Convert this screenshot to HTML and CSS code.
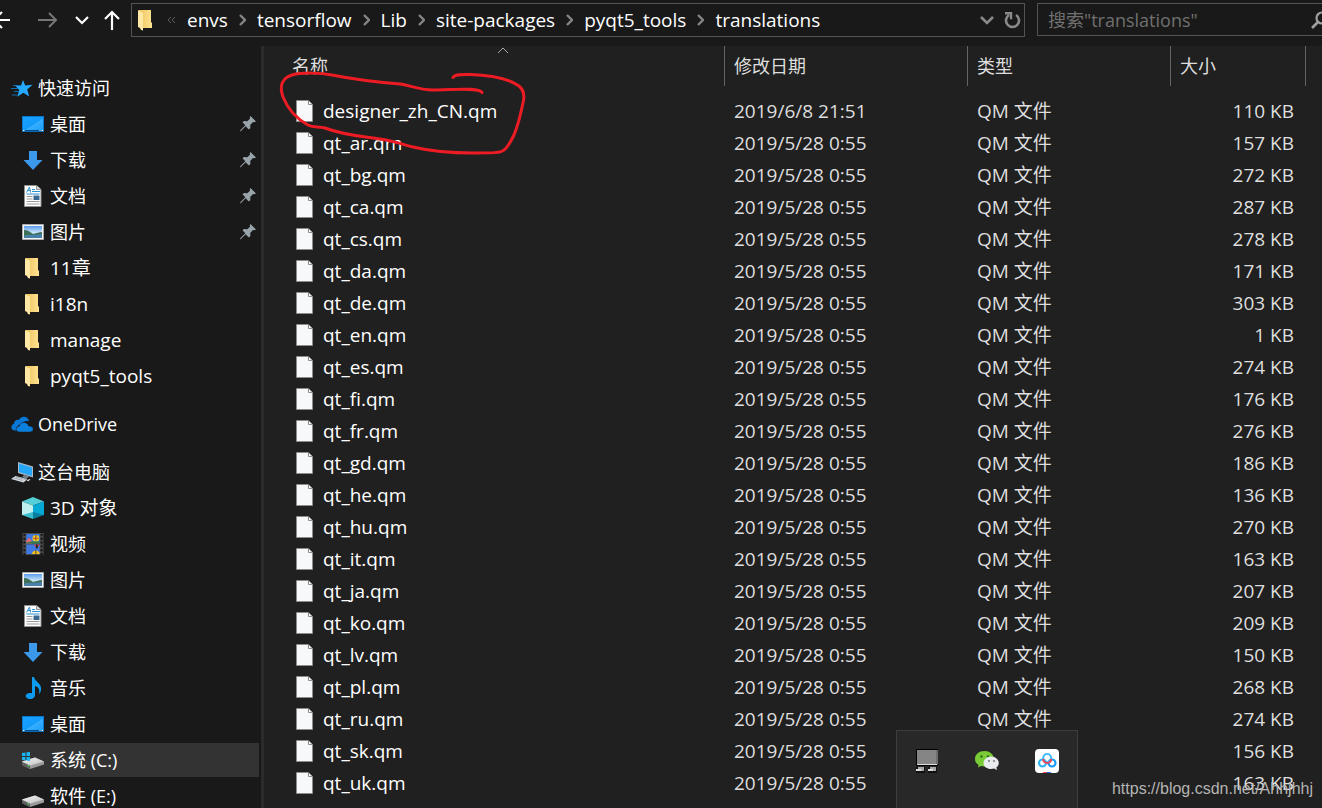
FILE: index.html
```html
<!DOCTYPE html>
<html lang="zh-CN">
<head>
<meta charset="utf-8">
<title>translations</title>
<link rel="stylesheet" href="styles.css">
</head>
<body>
<svg class="sprite" aria-hidden="true">
<defs>
<linearGradient id="g-blue" x1="0" y1="0" x2="1" y2="1"><stop offset="0" stop-color="#19a2ff"/><stop offset=".55" stop-color="#129bfa"/><stop offset=".56" stop-color="#37adff"/><stop offset="1" stop-color="#1da0fb"/></linearGradient>
<linearGradient id="g-fold" x1="0" y1="0" x2="1" y2="0"><stop offset="0" stop-color="#eec45f"/><stop offset="1" stop-color="#ffe391"/></linearGradient>
<linearGradient id="g-sky" x1="0" y1="0" x2="0" y2="1"><stop offset="0" stop-color="#5c9df0"/><stop offset=".55" stop-color="#c9e6fa"/><stop offset="1" stop-color="#8fc0dd"/></linearGradient>
<linearGradient id="g-disk" x1="0" y1="0" x2="1" y2="1"><stop offset="0" stop-color="#f5f5f5"/><stop offset="1" stop-color="#bdbdbf"/></linearGradient>
<symbol id="star" viewBox="0 0 22 22"><path d="M12 3l2.200 5.500 7.300-.7-5.300 4.700 2 7-5.800-3.700-6.200 4 2.100-6.800L4 8.500h6z" fill="#24a9ff"/><path d="M2 8.500h7M0 11.500h7M3 14.500h5M1 18h5" stroke="#0f6dac" stroke-width="1.200"/></symbol>
<symbol id="desktop" viewBox="0 0 22 22"><path d="M0 3h22v16H0z" fill="#0878cf"/><path d="M1 4h20v13H1z" fill="url(#g-blue)"/><path d="M1 17h20v1.200H1z" fill="#064c83"/><path d="M1 17h1.500v1H1zM17.500 17h1v1h-1zM19.500 17H21v1h-1.500z" fill="#fff"/></symbol>
<symbol id="down" viewBox="0 0 22 22"><path d="M7 2h8v9h5.500L11 21 1.500 11H7z" fill="#3c98ea"/></symbol>
<symbol id="doc" viewBox="0 0 22 22"><path d="M2.500.5h12l4.500 4v17H2.500z" fill="#fff" stroke="#909090"/><path d="M14.500.5v4H19" fill="#ddd" stroke="#909090"/><path d="M4.500 7.500l3-5.500 1 5.500M6 5.500h2.500M10 4.500h3M10 6.500h8M4.500 9h13" stroke="#2c92d0" fill="none"/><path d="M4.500 11.500h6M4.500 14h6M4.500 16.500h13M4.500 19h13" stroke="#999"/><path d="M11.500 10.500h6v4.500h-6z" fill="#3a6a92"/></symbol>
<symbol id="pic" viewBox="0 0 22 22"><path d="M.5 3.500h21v15H.5z" fill="#f6f6f6" stroke="#aaa"/><path d="M2 5h18v12H2z" fill="url(#g-sky)"/><path d="M2 9c4 0 6 2 9 4 4-1 6-2 9-2v3c-7 1-12 0-18 1z" fill="#3f7158"/><path d="M2 15c6-2 12-1 18-2v4H2z" fill="#467fa8"/></symbol>
<symbol id="folder" viewBox="0 0 22 22"><path d="M4 1h12v12l1 1v5H7L4 17z" fill="url(#g-fold)"/><path d="M3 1l5 3v17.500l-2-.5-1-2-2-1z" fill="#ffe8a6"/></symbol>
<symbol id="cloud" viewBox="0 0 22 22"><path d="M4 17.500C-.5 17.500-.8 12 3 10.800 3 7 6.500 6 8 7c2.500-5 9-4 10 1 -5-.5-7 2-7 3.500-4 0-6 2.500-5.500 6z" fill="#0877d5"/><path d="M8.500 19C4 19 4 13.500 8.500 13c1-5 8.500-4.500 9 0 6-.3 6 6 1.500 6z" fill="#0a80df" stroke="#191919" stroke-width=".5"/></symbol>
<symbol id="pc" viewBox="0 0 22 22"><path d="M7 1l15 4.500v11L7 12z" fill="#aab9c5"/><path d="M8 2.500l13 4v8.500L8 11z" fill="#25a6f8"/><path d="M13 14l5 1.500-2 2-5-1.200z" fill="#74828b"/><path d="M4.500 15l12 3-4 3.500L0 18z" fill="#d5dbe0"/><path d="M3 17l9 2.500M5 16l10 2.500" stroke="#899399" stroke-width=".7"/><path d="M15.500 19.500l3-1.500 1 .8-2.500 1.500z" fill="#e3e3e3"/></symbol>
<symbol id="cube" viewBox="0 0 22 22"><path d="M11 0l11 4.500-11 4L0 4.500z" fill="#55ced8"/><path d="M0 4.500l11 4V18L0 18z" fill="#c0eff0"/><path d="M22 4.500l-11 4V18l11 0z" fill="#05a9d4"/><path d="M0 18l11-3v7z" fill="#39bccb"/><path d="M22 18l-11-3v7z" fill="#087f9f"/></symbol>
<symbol id="video" viewBox="0 0 22 23"><path d="M0 0h22v23H0z" fill="#4a4a4a"/><path d="M4 1h14v10H4zM4 12h14v10H4z" fill="#3e78e0"/><path d="M2 1v22M20 1v22" stroke="#111" stroke-width="2" stroke-dasharray="2 2"/><path d="M4 8l3-3 3 4v2H4z" fill="#ee6472"/><ellipse cx="14" cy="5.500" rx="3.500" ry="3.500" fill="#f7ce22"/><path d="M14 2v6" stroke="#222" stroke-width=".8"/><path d="M11 5.500h6" stroke="#c8402d"/><path d="M4 10l5-1 9 0v2H4z" fill="#337b38"/><path d="M12 12h6l-2 3h-2z" fill="#e2464a"/><path d="M14 12h2v4h-2z" fill="#222"/><path d="M10 22c0-5 8-5 8 0z" fill="#f4c21f"/><path d="M14 18v4" stroke="#222" stroke-width=".8"/></symbol>
<symbol id="music" viewBox="0 0 22 22"><path d="M10 0h2c1 5 8 6 7 13-.3 2-1 3-2 4 1-5-.5-7-4-8v9c0 3-3 4.500-6 4-5-1-4-6 1-6 1 0 1.500 0 2 .3z" fill="#0d9bf0"/></symbol>
<symbol id="disk" viewBox="0 0 22 22"><path d="M0 14.500L13 10.500l9 4v3L8 22l-8-4z" fill="#9b9b9b"/><path d="M0 14.500L13 10.500l9 4L8 18.500z" fill="url(#g-disk)"/><path d="M0 15l8 3.700V22l-8-4z" fill="#5e5e5e"/><path d="M5.500 18.500l1.500.7" stroke="#36df51" stroke-width="1.300"/></symbol>
<symbol id="sysdisk" viewBox="0 0 22 22"><use href="#disk" y="-2" width="22" height="22"/><path d="M0 4l3.500-.5V7H0zM4.500 3.300L8 3v4H4.500zM0 8h3.500v3.500L0 11zM4.500 8H8v4l-3.500-.5z" fill="#18b7f0"/></symbol>
<symbol id="pin" viewBox="0 0 16 16"><path d="M10.500 0l5.500 5.500-1.800.8-1.200-.3-2.800 3 .2 3-1.500 1.500-3.300-3.300L1 15l-1 .5L.5 14l4.800-4.800L2.500 6.300 4 5l3.200.2L10 2.800l-.3-1.600z" fill="#98a3aa"/></symbol>
<symbol id="file" viewBox="0 0 17 22"><path d="M.5.500h11.500l4.500 4.500v16.500H.5z" fill="#f7f8f9" stroke="#8d8d8d"/><path d="M12.500.5v4h4" fill="#eee" stroke="#8d8d8d"/></symbol>
<symbol id="chev" viewBox="0 0 7 12"><path d="M1 1l5 5-5 5" fill="none" stroke="#858585" stroke-width="2.400"/></symbol>
</defs>
</svg>

<div class="window">
<header class="toolbar">
  <nav class="history" aria-label="导航">
    <button aria-label="后退"><svg width="11" height="20" viewBox="0 0 11 20"><path d="M-6 10H11M3 2l-8 8 8 8" transform="translate(-1 0)" fill="none" stroke="#fff" stroke-width="2"/></svg></button>
    <button aria-label="前进"><svg width="20" height="16" viewBox="0 0 20 16"><path d="M0 8h18M11 1l7 7-7 7" fill="none" stroke="#777" stroke-width="2"/></svg></button>
    <button aria-label="最近浏览的位置"><svg width="14" height="9" viewBox="0 0 14 9"><path d="M1 1l6 6 6-6" fill="none" stroke="#fff" stroke-width="2.200"/></svg></button>
    <button aria-label="向上"><svg width="16" height="20" viewBox="0 0 16 20"><path d="M8 20V2M1 9l7-7 7 7" fill="none" stroke="#fff" stroke-width="2.200"/></svg></button>
  </nav>
  <div class="address">
    <svg class="icon addr-folder"><use href="#folder"/></svg>
    <svg class="more" viewBox="0 0 9 8"><path d="M4 1L1 4l3 3M8 1L5 4l3 3" fill="none" stroke="#5c5c5c"/></svg>
    <button class="crumb">envs</button><svg class="chev"><use href="#chev"/></svg>
    <button class="crumb">tensorflow</button><svg class="chev"><use href="#chev"/></svg>
    <button class="crumb">Lib</button><svg class="chev"><use href="#chev"/></svg>
    <button class="crumb">site-packages</button><svg class="chev"><use href="#chev"/></svg>
    <button class="crumb">pyqt5_tools</button><svg class="chev"><use href="#chev"/></svg>
    <button class="crumb">translations</button>
    <button class="drop" aria-label="以前的位置"><svg width="14" height="9" viewBox="0 0 14 9"><path d="M1 1l6 6 6-6" fill="none" stroke="#8a8a8a" stroke-width="2.600"/></svg></button>
    <button class="refresh" aria-label="刷新"><svg width="17" height="17" viewBox="0 0 17 17"><path d="M12 3A6.500 6.500 0 1 1 5 3" fill="none" stroke="#8a8a8a" stroke-width="2.600"/><path d="M1 1.300h6v6" fill="none" stroke="#8a8a8a" stroke-width="2.400"/></svg></button>
  </div>
  <label class="search">
    <input type="text" aria-label="搜索" placeholder="搜索&quot;translations&quot;">
    <svg width="18" height="18" viewBox="0 0 18 18"><circle cx="11" cy="7" r="5.500" fill="none" stroke="#a0a0a0" stroke-width="2.200"/><path d="M7 11l-6 6" stroke="#a0a0a0" stroke-width="2.600"/></svg>
  </label>
</header>

<div class="body">
<nav class="sidebar" aria-label="文件夹">
  <section>
    <a class="item root" href="#"><svg class="icon"><use href="#star"/></svg><span>快速访问</span></a>
    <a class="item" href="#"><svg class="icon"><use href="#desktop"/></svg><span>桌面</span><svg class="pin"><use href="#pin"/></svg></a>
    <a class="item" href="#"><svg class="icon"><use href="#down"/></svg><span>下载</span><svg class="pin"><use href="#pin"/></svg></a>
    <a class="item" href="#"><svg class="icon"><use href="#doc"/></svg><span>文档</span><svg class="pin"><use href="#pin"/></svg></a>
    <a class="item" href="#"><svg class="icon"><use href="#pic"/></svg><span>图片</span><svg class="pin"><use href="#pin"/></svg></a>
    <a class="item latin" href="#"><svg class="icon"><use href="#folder"/></svg><span>11章</span></a>
    <a class="item latin" href="#"><svg class="icon"><use href="#folder"/></svg><span>i18n</span></a>
    <a class="item latin" href="#"><svg class="icon"><use href="#folder"/></svg><span>manage</span></a>
    <a class="item latin" href="#"><svg class="icon"><use href="#folder"/></svg><span>pyqt5_tools</span></a>
  </section>
  <section>
    <a class="item root" href="#"><svg class="icon"><use href="#cloud"/></svg><span>OneDrive</span></a>
  </section>
  <section>
    <a class="item root" href="#"><svg class="icon"><use href="#pc"/></svg><span>这台电脑</span></a>
    <a class="item latin" href="#"><svg class="icon"><use href="#cube"/></svg><span>3D 对象</span></a>
    <a class="item" href="#"><svg class="icon"><use href="#video"/></svg><span>视频</span></a>
    <a class="item" href="#"><svg class="icon"><use href="#pic"/></svg><span>图片</span></a>
    <a class="item" href="#"><svg class="icon"><use href="#doc"/></svg><span>文档</span></a>
    <a class="item" href="#"><svg class="icon"><use href="#down"/></svg><span>下载</span></a>
    <a class="item" href="#"><svg class="icon"><use href="#music"/></svg><span>音乐</span></a>
    <a class="item" href="#"><svg class="icon"><use href="#desktop"/></svg><span>桌面</span></a>
    <a class="item selected" href="#" aria-current="true"><svg class="icon"><use href="#sysdisk"/></svg><span>系统 (C:)</span></a>
    <a class="item" href="#"><svg class="icon"><use href="#disk"/></svg><span>软件 (E:)</span></a>
  </section>
</nav>

<main class="files">
<table>
<colgroup><col><col class="c-date"><col class="c-type"><col class="c-size"></colgroup>
<thead><tr>
<th class="name" aria-sort="ascending"><button>名称</button><svg class="sort" viewBox="0 0 12 7"><path d="M1 6l5-5 5 5" fill="none" stroke="#aaa"/></svg></th>
<th><button>修改日期</button></th><th><button>类型</button></th><th><button>大小</button></th>
</tr></thead>
<tbody>
<tr><td><svg class="file"><use href="#file"/></svg>designer_zh_CN.qm</td><td>2019/6/8 21:51</td><td>QM 文件</td><td>110 KB</td></tr>
<tr><td><svg class="file"><use href="#file"/></svg>qt_ar.qm</td><td>2019/5/28 0:55</td><td>QM 文件</td><td>157 KB</td></tr>
<tr><td><svg class="file"><use href="#file"/></svg>qt_bg.qm</td><td>2019/5/28 0:55</td><td>QM 文件</td><td>272 KB</td></tr>
<tr><td><svg class="file"><use href="#file"/></svg>qt_ca.qm</td><td>2019/5/28 0:55</td><td>QM 文件</td><td>287 KB</td></tr>
<tr><td><svg class="file"><use href="#file"/></svg>qt_cs.qm</td><td>2019/5/28 0:55</td><td>QM 文件</td><td>278 KB</td></tr>
<tr><td><svg class="file"><use href="#file"/></svg>qt_da.qm</td><td>2019/5/28 0:55</td><td>QM 文件</td><td>171 KB</td></tr>
<tr><td><svg class="file"><use href="#file"/></svg>qt_de.qm</td><td>2019/5/28 0:55</td><td>QM 文件</td><td>303 KB</td></tr>
<tr><td><svg class="file"><use href="#file"/></svg>qt_en.qm</td><td>2019/5/28 0:55</td><td>QM 文件</td><td>1 KB</td></tr>
<tr><td><svg class="file"><use href="#file"/></svg>qt_es.qm</td><td>2019/5/28 0:55</td><td>QM 文件</td><td>274 KB</td></tr>
<tr><td><svg class="file"><use href="#file"/></svg>qt_fi.qm</td><td>2019/5/28 0:55</td><td>QM 文件</td><td>176 KB</td></tr>
<tr><td><svg class="file"><use href="#file"/></svg>qt_fr.qm</td><td>2019/5/28 0:55</td><td>QM 文件</td><td>276 KB</td></tr>
<tr><td><svg class="file"><use href="#file"/></svg>qt_gd.qm</td><td>2019/5/28 0:55</td><td>QM 文件</td><td>186 KB</td></tr>
<tr><td><svg class="file"><use href="#file"/></svg>qt_he.qm</td><td>2019/5/28 0:55</td><td>QM 文件</td><td>136 KB</td></tr>
<tr><td><svg class="file"><use href="#file"/></svg>qt_hu.qm</td><td>2019/5/28 0:55</td><td>QM 文件</td><td>270 KB</td></tr>
<tr><td><svg class="file"><use href="#file"/></svg>qt_it.qm</td><td>2019/5/28 0:55</td><td>QM 文件</td><td>163 KB</td></tr>
<tr><td><svg class="file"><use href="#file"/></svg>qt_ja.qm</td><td>2019/5/28 0:55</td><td>QM 文件</td><td>207 KB</td></tr>
<tr><td><svg class="file"><use href="#file"/></svg>qt_ko.qm</td><td>2019/5/28 0:55</td><td>QM 文件</td><td>209 KB</td></tr>
<tr><td><svg class="file"><use href="#file"/></svg>qt_lv.qm</td><td>2019/5/28 0:55</td><td>QM 文件</td><td>150 KB</td></tr>
<tr><td><svg class="file"><use href="#file"/></svg>qt_pl.qm</td><td>2019/5/28 0:55</td><td>QM 文件</td><td>268 KB</td></tr>
<tr><td><svg class="file"><use href="#file"/></svg>qt_ru.qm</td><td>2019/5/28 0:55</td><td>QM 文件</td><td>274 KB</td></tr>
<tr><td><svg class="file"><use href="#file"/></svg>qt_sk.qm</td><td>2019/5/28 0:55</td><td>QM 文件</td><td>156 KB</td></tr>
<tr><td><svg class="file"><use href="#file"/></svg>qt_uk.qm</td><td>2019/5/28 0:55</td><td>QM 文件</td><td>163 KB</td></tr>
</tbody>
</table>
<svg class="ink" viewBox="276 68 254 90"><path d="M453 77.500C455 74 462 74.500 470 74.500C488 75 506 77 519 86C524 90 525 95 523 103C520 116 519 123 514 135C511 141 508 147 504 150C501 153 493 153 473 153C452 153 434 152 413 147C401 144 394 141 380 139C360 136 343 135 325 128C318 126 314 128 308 125C295 118 287 107 283 97C279 86 282 78 292 75C303 72 321 73 332 75C352 79 375 82 400 84C409 85 419 90 433 90C453 90 478 87 482 92.500" fill="none" stroke="#ed1c24" stroke-width="3" stroke-linecap="round" stroke-linejoin="round"/></svg>
</main>
</div>

<aside class="tray">
  <button aria-label="网络"><svg width="24" height="24" viewBox="0 0 24 24"><path d="M1 0h22v17H1z" fill="#000"/><path d="M2 1h19v14H2z" fill="#858585"/><path d="M2 15.500h20V1" fill="none" stroke="#ddd"/><path d="M1 18h9v6H1zM13 18h9v6h-9z" fill="#111"/><path d="M3 18h6v4H3zM15 18h6v4h-6z" fill="#aaa"/><path d="M1 20h5v2H1zM13 20h5v2h-5z" fill="#ddd"/></svg></button>
  <button aria-label="微信"><svg width="24" height="24" viewBox="0 0 24 24"><path d="M9.500 2C4 2 0 5.500 0 10c0 2.500 1.300 4.500 3.500 6L3 18.500 6 17c4 1 8 0 10-2 6-6 1-13-6.500-13z" fill="#79cc35"/><circle cx="6.500" cy="7.500" r="1.200" fill="#2d671b"/><circle cx="13" cy="7.500" r="1.200" fill="#2d671b"/><path d="M16.500 7.500C12 7.500 8.500 10.500 8.500 14c0 5 6 7 10.500 5.500l3 1.500-.7-2.500C27 14 22 7.500 16.500 7.500z" fill="#e8ecef"/><circle cx="14" cy="12" r="1" fill="#777"/><circle cx="19" cy="12" r="1" fill="#777"/></svg></button>
  <button aria-label="百度网盘"><svg width="24" height="24" viewBox="0 0 24 24"><rect width="24" height="24" rx="4" fill="#fff"/><circle cx="7.500" cy="14" r="3.500" fill="none" stroke="#31b7f7" stroke-width="2.200"/><circle cx="17" cy="14" r="3.500" fill="none" stroke="#189dfa" stroke-width="2.200"/><circle cx="12.200" cy="9" r="4" fill="none" stroke="#48bdf7" stroke-width="2.200"/><path d="M8.200 10a4 4 0 0 0 8 0" fill="none" stroke="#ed4358" stroke-width="2.200"/><path d="M7 24l2-1h3v1z" fill="#f24252"/><path d="M12 23h3l2 1h-5z" fill="#2266e8"/></svg></button>
</aside>
<div class="credit">https://blog.csdn.net/Ahhjhhj</div>
</div>
</body>
</html>
```
FILE: styles.css
```css
* { box-sizing: border-box; }
html, body { height: 100%; }
body {
  margin: 0;
  overflow: hidden;
  background: #191919;
  color: #fff;
  font: 18px/24px "Open Sans", "Noto Sans CJK SC", sans-serif;
}
button {
  padding: 0;
  border: 0;
  background: none;
  color: inherit;
  font: inherit;
}
svg { flex: none; display: block; }
.sprite { position: absolute; width: 0; height: 0; }
.window {
  position: relative;
  display: flex;
  flex-direction: column;
  height: 100%;
  overflow: hidden;
}

.toolbar { display: flex; flex: none; height: 46px; padding-top: 3px; }
.history { display: flex; align-items: center; height: 34px; width: 131px; }
.history button:nth-child(2) { margin-left: 27px; }
.history button:nth-child(3) { margin-left: 17px; }
.history button:nth-child(4) { margin-left: 15px; }
.address {
  flex: 1;
  display: flex;
  align-items: center;
  height: 34px;
  padding: 0 3px;
  border: 1px solid #535353;
}
.crumb { height: 26px; font-size: 19px; }
.icon { width: 22px; height: 22px; }
.more { width: 9px; height: 8px; margin: 0 11px 0 10px; }
.chev { width: 7px; height: 12px; margin: 0 11px; }
.drop { margin-left: auto; }
.refresh { margin-left: 10px; }
.search {
  flex: none;
  display: flex;
  align-items: center;
  width: 285px;
  height: 33px;
  margin-left: 12px;
  border: 1px solid #535353;
  border-right: 0;
}
.search input {
  flex: none;
  width: 273px;
  padding: 0 0 0 10px;
  border: 0;
  outline: 0;
  background: none;
  color: #fff;
  font: inherit;
}
.search input::placeholder { color: #707070; opacity: 1; }

.body { display: flex; flex: 1; min-height: 0; }
.sidebar {
  flex: none;
  width: 264px;
  padding: 25px 2px 0 0;
  border-right: 3px solid #2b2b2b;
  overflow: hidden;
}
.sidebar section { margin-bottom: 14px; }
.item {
  display: flex;
  align-items: center;
  gap: 6px;
  height: 34px;
  margin-bottom: 2px;
  padding: 0 3px 0 22px;
  color: #fff;
  text-decoration: none;
}
.item.root { padding-left: 11px; gap: 5px; }
.item.latin { font-size: 19px; }
.item.selected { background: #333; }
.pin { width: 16px; height: 16px; margin-left: auto; }

.files {
  position: relative;
  flex: 1;
  padding-right: 16px;
  background: #202020;
  overflow: hidden;
}
table { width: 100%; table-layout: fixed; border-collapse: separate; border-spacing: 0; }
.c-date { width: 243px; }
.c-type { width: 203px; }
.c-size { width: 135px; }
th {
  position: relative;
  height: 40px;
  padding: 0 9px;
  border-right: 1px solid #636363;
  color: #dedede;
  font-weight: 400;
  text-align: left;
}
th.name { padding-left: 28px; }
.sort { position: absolute; top: 1px; left: calc(50% + 3px); width: 12px; height: 7px; }
tbody::before { content: ""; display: block; height: 9px; }
td { height: 32px; padding: 0 9px; color: #dedede; font-size: 19px; white-space: nowrap; }
td:first-child { padding-left: 32px; color: #fff; }
td:last-child { padding-right: 12px; text-align: right; }
.file {
  display: inline-block;
  width: 17px;
  height: 22px;
  margin-right: 10px;
  vertical-align: -4px;
}
.ink { position: absolute; top: 22px; left: 12px; width: 254px; height: 90px; }

.tray {
  position: absolute;
  right: 244px;
  bottom: 0;
  display: flex;
  gap: 36px;
  width: 182px;
  height: 78px;
  padding: 18px 18px 0;
  border: 1px solid #3d3d3d;
  border-bottom: 0;
  background: #282828;
}
.tray button { height: 24px; }
.credit {
  position: absolute;
  right: 9px;
  bottom: 8px;
  color: #b4b4b4;
  font: 16px/22px "Liberation Sans", sans-serif;
}
```
